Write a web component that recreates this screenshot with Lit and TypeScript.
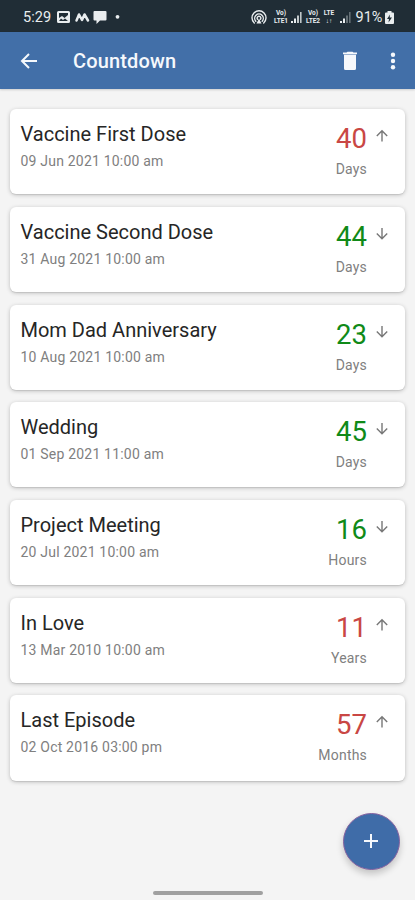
import { LitElement, html, css, svg } from "lit";
import { customElement, property } from "lit/decorators.js";

interface Countdown {
  title: string;
  date: string;
  value: number;
  unit: string;
  past: boolean;
}

const ITEMS: Countdown[] = [
  { title: "Vaccine First Dose", date: "09 Jun 2021 10:00 am", value: 40, unit: "Days", past: true },
  { title: "Vaccine Second Dose", date: "31 Aug 2021 10:00 am", value: 44, unit: "Days", past: false },
  { title: "Mom Dad Anniversary", date: "10 Aug 2021 10:00 am", value: 23, unit: "Days", past: false },
  { title: "Wedding", date: "01 Sep 2021 11:00 am", value: 45, unit: "Days", past: false },
  { title: "Project Meeting", date: "20 Jul 2021 10:00 am", value: 16, unit: "Hours", past: false },
  { title: "In Love", date: "13 Mar 2010 10:00 am", value: 11, unit: "Years", past: true },
  { title: "Last Episode", date: "02 Oct 2016 03:00 pm", value: 57, unit: "Months", past: true },
];

@customElement("status-bar")
export class StatusBar extends LitElement {
  static styles = css`
    :host {
      display: flex;
      justify-content: space-between;
      align-items: center;
      height: 32px;
      box-sizing: border-box;
      padding: 2px 21px 0 23px;
      background: #202d36;
      color: #e9edef;
      font: 14.5px/17px Roboto, sans-serif;
    }
    .group { display: flex; align-items: center; }
    .time { width: 33px; letter-spacing: 0.1px; }
    .net { flex: none; font: 700 6.5px/8px Roboto, sans-serif; text-align: center; white-space: nowrap; }
    .volte { width: 17px; margin-left: 6px; }
    .lte { width: 13px; margin: 0 3px 0 1px; }
    .second { margin-left: 3px; }
    .percent { width: 28px; margin-left: 5px; }
    svg { display: block; flex: none; fill: currentColor; }
    .battery { margin-left: 1.5px; }
  `;

  private signal(dim: boolean) {
    return html`<svg width="12" height="13" viewBox="0 0 12 13">
      <path d="M1 10h2v2H1zM4 7.5h2V12H4z" />
      <path d="M7 4.5h2V12H7zM10 1h1.6v11H10z" opacity=${dim ? 0.35 : 0.8} />
    </svg>`;
  }

  render() {
    return html`
      <div class="group">
        <span class="time">5:29</span>
        <svg width="66" height="14" viewBox="0 0 66 14">
          <path fill-rule="evenodd" d="M2.5 1h10Q14 1 14 2.5v9q0 1.5-1.5 1.5h-10Q1 13 1 11.5v-9Q1 1 2.5 1zM3 3v5l3-2 2.5 2L12 5V3zM3 11h9L9 8.5 7 10 5 8.5z" />
          <path d="M20.5 10.5L23 4.5l3 5.500L28.500 4.500l3.500 6" fill="none" stroke="currentColor" stroke-width="2.5" stroke-linejoin="round" stroke-linecap="round" />
          <path d="M38.5 1h11q1 0 1 1v7.5q0 1-1 1h-5.5L40.5 14v-3.5h-2q-1 0-1-1V2q0-1 1-1z" />
          <circle cx="61.5" cy="6.8" r="1.9" />
        </svg>
      </div>
      <div class="group">
        <svg width="16" height="15" viewBox="0 0 16 15">
          <g fill="none" stroke="currentColor" stroke-width="1.4" stroke-linecap="round">
            <path d="M3.3 13a7 7 0 1 1 9.4 0" />
            <path d="M4.8 11.2a4.3 4.3 0 1 1 6.4 0" />
            <path d="M6.500 9.300a1.900 1.900 0 1 1 3 0" />
          </g>
          <path d="M8 8.500l2.500 5h-5z" />
        </svg>
        <div class="net volte">Vo)<br />LTE1</div>
        ${this.signal(false)}
        <div class="net volte second">Vo)<br />LTE2</div>
        <div class="net lte">LTE<br />↓↑</div>
        ${this.signal(true)}
        <span class="percent">91%</span>
        <svg class="battery" width="9" height="13" viewBox="0 0 9 13">
          <path fill-rule="evenodd" d="M2.5 0h4v1.5H8q1 0 1 1V12q0 1-1 1H1q-1 0-1-1V2.5q0-1 1-1h1.5zM5 3.5L2 8h2l-.5 3.5L7 6.5H4.7z" />
        </svg>
      </div>
    `;
  }
}

@customElement("app-header")
export class AppHeader extends LitElement {
  static styles = css`
    :host {
      display: flex;
      align-items: center;
      height: 56.5px;
      box-sizing: border-box;
      padding: 2px 16px 0 17px;
      background: #426fa8;
      box-shadow: 0 1px 2px rgba(0, 0, 0, 0.16);
      color: #f5f8fc;
    }
    h1 {
      flex: 1;
      margin: 0 0 0 32px;
      font: 500 20px/26px Roboto, sans-serif;
      letter-spacing: 0.15px;
    }
    svg { display: block; fill: currentColor; }
    .more { margin-left: 29px; }
  `;

  render() {
    return html`
      <svg width="24" height="24" viewBox="0 0 24 24">
        <path d="M20 12H5.5M12 5l-7 7 7 7" fill="none" stroke="currentColor" stroke-width="2" />
      </svg>
      <h1>Countdown</h1>
      <svg width="16" height="20" viewBox="0 0 16 20">
        <path d="M1 1.5h3.5l1-.7h5l1 .7H15v1.800H1zM2 3.800h12V17.500q0 1.500-1.500 1.500h-9Q2 19 2 17.500z" />
      </svg>
      <svg class="more" width="12" height="20" viewBox="0 0 12 20">
        <circle cx="6" cy="3.7" r="2.2" /><circle cx="6" cy="10" r="2.2" /><circle cx="6" cy="16.3" r="2.2" />
      </svg>
    `;
  }
}

@customElement("countdown-card")
export class CountdownCard extends LitElement {
  @property({ attribute: false }) item!: Countdown;

  static styles = css`
    :host {
      display: flex;
      justify-content: space-between;
      box-sizing: border-box;
      height: 85.2px;
      padding: 13px 16.5px 0 10.5px;
      border-radius: 6px;
      background: #fff;
      box-shadow: 0 1px 4px rgba(0, 0, 0, 0.22), 0 1px 1px rgba(0, 0, 0, 0.08);
      font-family: Roboto, sans-serif;
    }
    .title { font-size: 20px; line-height: 24px; color: #262626; white-space: nowrap; }
    .date { margin-top: 6px; font-size: 14px; line-height: 18px; color: #808080; letter-spacing: 0.2px; }
    .right { display: flex; align-items: flex-start; }
    .amount { text-align: right; }
    .value { font-size: 27.5px; line-height: 34.5px; color: #108a18; }
    .value.past { color: #c94744; }
    .unit { margin-top: 3.5px; font-size: 14px; line-height: 18px; color: #808080; letter-spacing: 0.2px; }
    .arrow { display: block; margin: 7px 0 0 7.5px; fill: none; stroke: #777; stroke-width: 1.4; }
  `;

  render() {
    const { title, date, value, unit, past } = this.item;
    return html`
      <div>
        <div class="title">${title}</div>
        <div class="date">${date}</div>
      </div>
      <div class="right">
        <div class="amount">
          <div class="value ${past ? "past" : ""}">${value}</div>
          <div class="unit">${unit}</div>
        </div>
        <svg class="arrow" width="14" height="14" viewBox="0 0 14 14">
          ${past
            ? svg`<path d="M7 12.5V2M1.8 7L7 1.8 12.2 7" />`
            : svg`<path d="M7 1v10.5M1.8 6.5L7 11.7l5.2-5.2" />`}
        </svg>
      </div>
    `;
  }
}

@customElement("app-root")
export class AppRoot extends LitElement {
  static styles = css`
    :host {
      display: flex;
      flex-direction: column;
      position: relative;
      height: 900px;
      overflow: hidden;
      background: #f4f4f4;
    }
    .list {
      display: flex;
      flex-direction: column;
      gap: 12.5px;
      padding: 20.7px 10px 0 10px;
    }
    .fab {
      position: absolute;
      right: 15.5px;
      bottom: 30.5px;
      width: 57px;
      height: 57px;
      display: grid;
      place-items: center;
      padding: 0;
      border: 1px solid #8461a0;
      border-radius: 50%;
      background: #3f6ca8;
      box-shadow: 0 4px 7px rgba(0, 0, 0, 0.2);
    }
    .fab path { stroke: #f5f8fc; stroke-width: 2; }
    .home-bar {
      position: absolute;
      left: 153px;
      bottom: 5px;
      width: 110px;
      height: 4px;
      border-radius: 2px;
      background: #a0a0a0;
    }
  `;

  render() {
    return html`
      <status-bar></status-bar>
      <app-header></app-header>
      <main class="list">
        ${ITEMS.map((item) => html`<countdown-card .item=${item}></countdown-card>`)}
      </main>
      <button class="fab" aria-label="Add countdown">
        <svg width="16" height="16" viewBox="0 0 16 16"><path d="M8 1v14M1 8h14" /></svg>
      </button>
      <div class="home-bar"></div>
    `;
  }
}
